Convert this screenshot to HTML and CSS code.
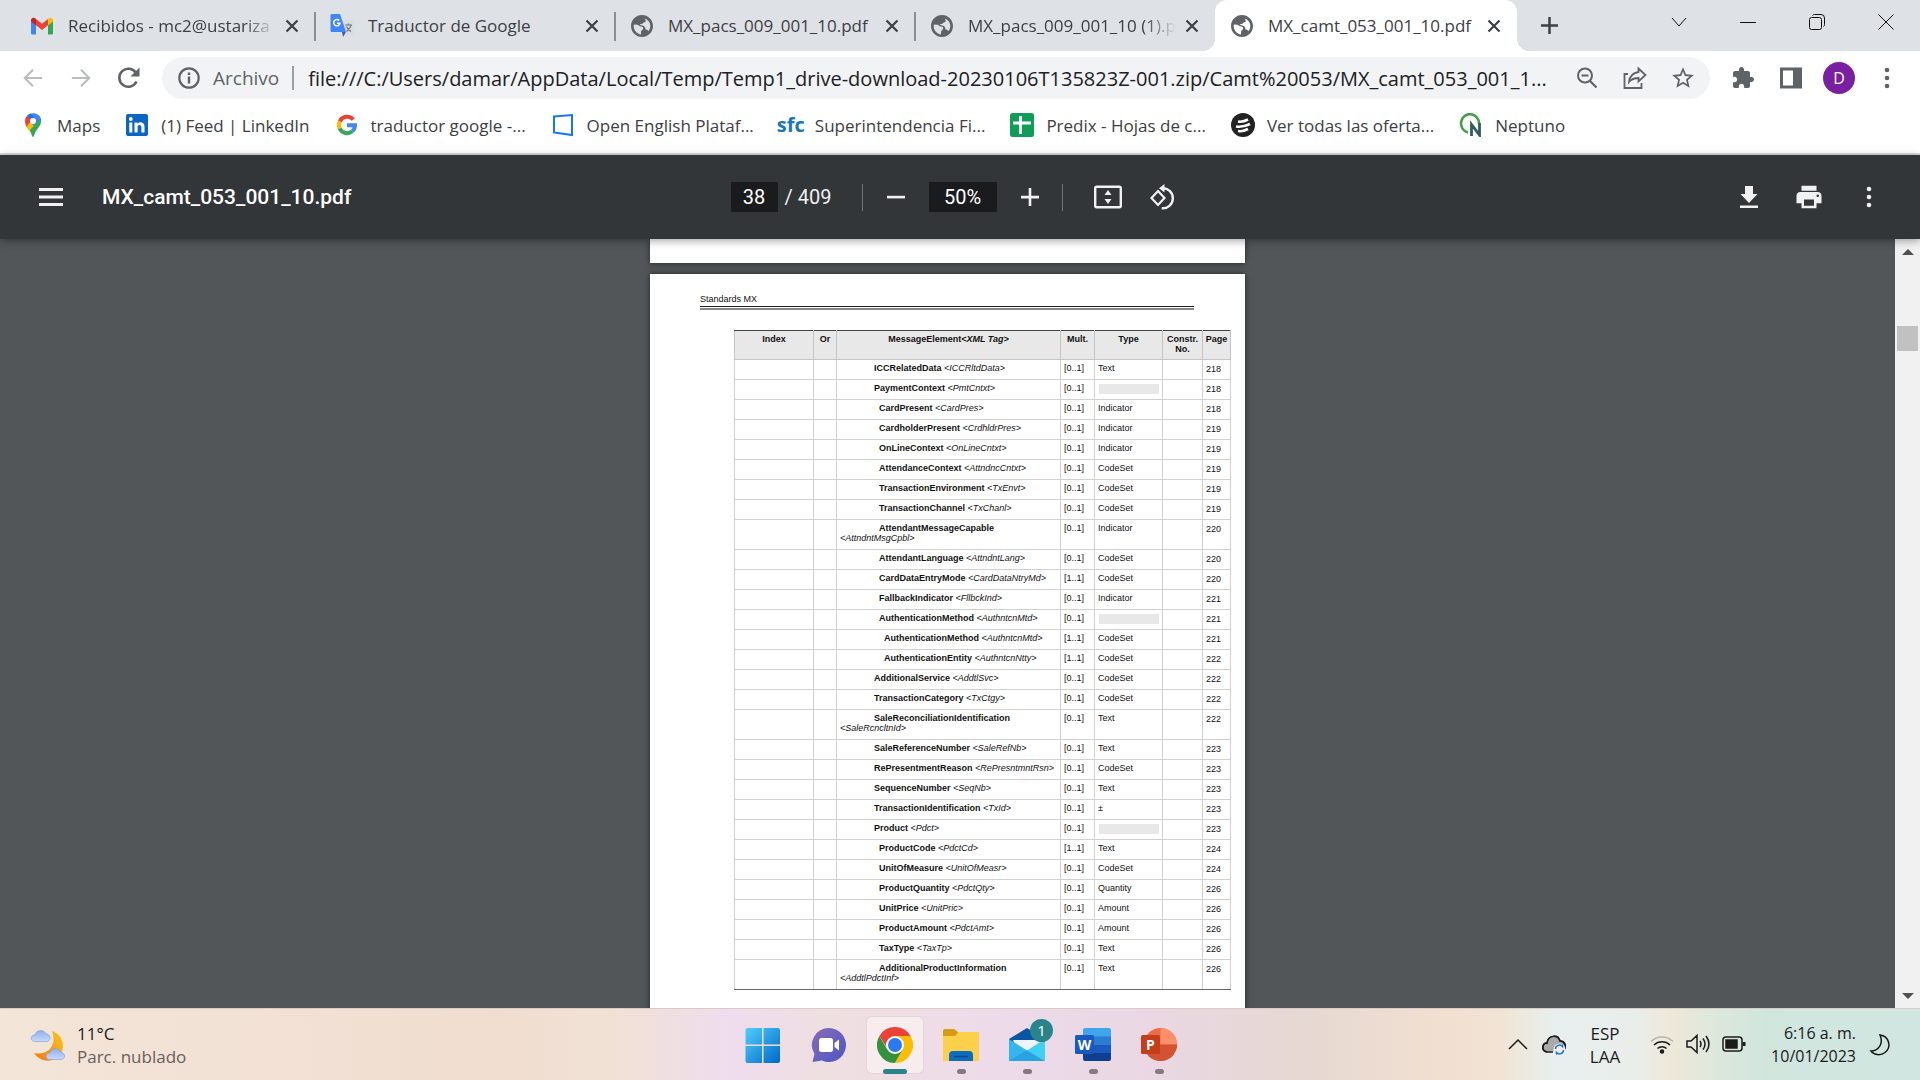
FILE: index.html
```html
<!DOCTYPE html>
<html lang="es">
<head>
<meta charset="utf-8">
<title>MX_camt_053_001_10.pdf</title>
<link rel="stylesheet" href="styles.css">
</head>
<body>
<svg class="defs" aria-hidden="true">
  <symbol id="globe" viewBox="0 0 24 24"><path d="M12 1C5.920 1 1 5.920 1 12s4.920 11 11 11 11-4.920 11-11S18.080 1 12 1zm-1 19.500c-4-.5-7.300-4-7.300-8.500 0-.6.1-1 .2-1.500l3.600.2c1.500.3 2 1.800 3.500 1.800 1.800 0 2.500 1 2 2.500-.4 1.200-2 1.500-2 3v2.500zm7.500-3.300c-.6-1-1.500-1.700-3-1.700 0-2.500-1.500-4-4-4.200-.8-.1-1.500-.6-1.500-1.300h1.500c1.500 0 1.500-1.500 3-1.700 1.500-.2 1.500-1.500.8-2.800l-.8-1c3.400 1 5.800 4 5.800 7.500 0 2-.7 3.800-1.800 5.200z"/></symbol>
  <symbol id="x" viewBox="0 0 16 16"><path d="M2.500 2.500l11 11M13.500 2.500l-11 11" fill="none" stroke="currentColor" stroke-width="2.200"/></symbol>
  <symbol id="kebab" viewBox="0 0 24 24"><circle cx="12" cy="4" r="2.300"/><circle cx="12" cy="12" r="2.300"/><circle cx="12" cy="20" r="2.300"/></symbol>
</svg>

<div class="app">
  <header class="browser">
    <div class="tabstrip">
      <nav class="tabs" aria-label="Pestañas">
        <div class="tab">
          <svg class="ico" viewBox="0 0 24 24"><path fill="#4285f4" d="M1 6v13c0 1 .7 1.500 1.500 1.500H6V10z"/><path fill="#34a853" d="M23 6v13c0 1-.7 1.500-1.500 1.500H18V10z"/><path fill="#ea4335" d="M6 5l6 4.700L18 5v6.300l-6 4.700-6-4.700z"/><path fill="#c5221f" d="M1 6.500C1 4 3.500 3.200 5 4.300l1 .7v6.300L1 7.600z"/><path fill="#fbbc04" d="M23 6.500c0-2.500-2.500-3.300-4-2.200l-1 .7v6.300l5-3.700z"/></svg>
          <a href="#" class="tab-title fade">Recibidos - mc2@ustariza</a>
          <button class="close" aria-label="Cerrar"><svg viewBox="0 0 16 16"><use href="#x"/></svg></button>
        </div>
        <div class="tab">
          <svg class="ico" viewBox="0 0 24 24"><path fill="#d9dce0" d="M11 6h11c1 0 1.500.5 1.500 1.500v12c0 1-.5 1.500-1.500 1.500h-7z"/><path fill="none" stroke="#70757a" stroke-width="1.200" d="M15 11h7M18.500 9.500V11M21 11c-.5 3-2.500 5-4.500 6.500M16.500 12.500c.7 2 2.500 4 4.500 5"/><path fill="#4285f4" d="M2 0h8l6 18H2C1 18 .5 17.500.5 16.500v-15C.5.500 1 0 2 0z"/><path fill="#3a5bc7" d="M12 18h4l-3 5z"/><path fill="none" stroke="#fff" stroke-width="1.500" d="M9.300 6.500A3.200 3.200 0 1 0 10 9.300H7"/></svg>
          <a href="#" class="tab-title">Traductor de Google</a>
          <button class="close" aria-label="Cerrar"><svg viewBox="0 0 16 16"><use href="#x"/></svg></button>
        </div>
        <div class="tab">
          <svg class="ico grey" viewBox="0 0 24 24"><use href="#globe"/></svg>
          <a href="#" class="tab-title">MX_pacs_009_001_10.pdf</a>
          <button class="close" aria-label="Cerrar"><svg viewBox="0 0 16 16"><use href="#x"/></svg></button>
        </div>
        <div class="tab last">
          <svg class="ico grey" viewBox="0 0 24 24"><use href="#globe"/></svg>
          <a href="#" class="tab-title fade">MX_pacs_009_001_10 (1).pdf</a>
          <button class="close" aria-label="Cerrar"><svg viewBox="0 0 16 16"><use href="#x"/></svg></button>
        </div>
        <div class="tab active">
          <svg class="ico grey" viewBox="0 0 24 24"><use href="#globe"/></svg>
          <a href="#" class="tab-title">MX_camt_053_001_10.pdf</a>
          <button class="close" aria-label="Cerrar"><svg viewBox="0 0 16 16"><use href="#x"/></svg></button>
        </div>
      </nav>
      <button class="newtab" aria-label="Nueva pestaña"><svg viewBox="0 0 20 20"><path d="M10 1v18M1 10h18" stroke="currentColor" stroke-width="2.600"/></svg></button>
      <div class="window-controls">
        <button aria-label="Buscar pestañas"><svg viewBox="0 0 16 16"><path d="M1 4l7 8 7-8"/></svg></button>
        <button aria-label="Minimizar"><svg viewBox="0 0 16 16"><path d="M0 8.500h16"/></svg></button>
        <button aria-label="Restaurar"><svg viewBox="0 0 16 16"><rect x=".5" y="3.500" width="12" height="12" rx="2"/><path d="M3.500 1.500Q4 .5 5.500.5H12q3.500 0 3.500 3.500v6.500q0 1.500-1 2"/></svg></button>
        <button aria-label="Cerrar ventana"><svg viewBox="0 0 16 16"><path d="M.5.500l15 15M15.500.500l-15 15"/></svg></button>
      </div>
    </div>

    <div class="toolbar">
      <button class="tool pale" aria-label="Atrás"><svg viewBox="0 0 24 24"><path d="M22 12H3M12 3l-9 9 9 9" fill="none" stroke="currentColor" stroke-width="2.200"/></svg></button>
      <button class="tool pale" aria-label="Adelante"><svg viewBox="0 0 24 24"><path d="M2 12h19M12 3l9 9-9 9" fill="none" stroke="currentColor" stroke-width="2.200"/></svg></button>
      <button class="tool" aria-label="Recargar"><svg viewBox="0 0 24 24"><path d="M19.500 15.500A9 9 0 1 1 19 7" fill="none" stroke="currentColor" stroke-width="2.600"/><path d="M22.500 1.500v9h-9z"/></svg></button>
      <div class="omnibox">
        <svg class="ico grey" viewBox="0 0 24 24"><circle cx="12" cy="12" r="9.700" fill="none" stroke="currentColor" stroke-width="2.200"/><path d="M10.800 10.500h2.400v7h-2.400zM10.800 6.500h2.400V9h-2.400z"/></svg>
        <label class="scheme" for="url">Archivo</label>
        <input id="url" class="url" type="text" value="file:///C:/Users/damar/AppData/Local/Temp/Temp1_drive-download-20230106T135823Z-001.zip/Camt%20053/MX_camt_053_001_1...">
        <button class="tool" aria-label="Zoom"><svg viewBox="0 0 24 24"><circle cx="10" cy="9.500" r="7" fill="none" stroke="currentColor" stroke-width="2"/><path d="M6.500 9.500h7M15 15l6.500 6.500" fill="none" stroke="currentColor" stroke-width="2.200"/></svg></button>
        <button class="tool" aria-label="Compartir"><svg viewBox="0 0 24 24"><path d="M5 8H1.500v14h17v-5M15.500 2.500l7 6.500-7 6.500V12c-4 0-7 1-9.500 4 .5-5 3.500-9 9.500-10z" fill="none" stroke="currentColor" stroke-width="1.800"/></svg></button>
        <button class="tool" aria-label="Favorito"><svg class="star" viewBox="0 0 24 24"><path d="M22 9.240l-7.190-.62L12 2 9.190 8.630 2 9.240l5.460 4.730L5.820 21 12 17.270 18.180 21l-1.630-7.030L22 9.240zM12 15.400l-3.760 2.270 1-4.280-3.320-2.880 4.380-.38L12 6.100l1.710 4.040 4.380.38-3.320 2.880 1 4.280L12 15.400z"/></svg></button>
      </div>
      <button class="tool" aria-label="Extensiones"><svg viewBox="0 0 24 24"><path d="M20.500 11H19V7c0-1.100-.9-2-2-2h-4V3.500C13 2.120 11.880 1 10.500 1S8 2.120 8 3.500V5H4c-1.100 0-1.990.9-1.990 2v3.800H3.500c1.490 0 2.700 1.210 2.700 2.700s-1.210 2.700-2.700 2.700H2V20c0 1.100.9 2 2 2h3.800v-1.500c0-1.490 1.210-2.700 2.700-2.700 1.490 0 2.700 1.210 2.700 2.700V22H17c1.100 0 2-.9 2-2v-4h1.500c1.380 0 2.500-1.120 2.500-2.500S21.880 11 20.500 11z"/></svg></button>
      <button class="tool" aria-label="Panel lateral"><svg viewBox="0 0 24 24"><path fill-rule="evenodd" d="M1 1.500h22v21H1zM4 4.500v15h10v-15z"/></svg></button>
      <button class="avatar" aria-label="Perfil">D</button>
      <button class="tool" aria-label="Menú"><svg viewBox="0 0 24 24"><use href="#kebab"/></svg></button>
    </div>

    <nav class="bookmarks" aria-label="Marcadores">
      <a href="#"><svg class="ico" viewBox="0 0 24 24"><path fill="#34a853" d="M12 24c-.7 0-1-1.500-2-4-1-2.300-3.500-4.500-4.800-7L17 2c2.500 1.500 3.500 4 3 7-.5 4.500-4.500 7-6 11-1 2.500-1.300 4-2 4z"/><path fill="#fbbc04" d="M5.200 13L9 8.500l5.500 2.500-6.300 7C7 16.300 6 14.800 5.200 13z"/><path fill="#4285f4" d="M9 .7C14-1 18.300 1.500 19.700 5.500L12.500 13 8 6z"/><path fill="#ea4335" d="M6 2.800L11 7l-5.500 6.500C3.500 9.800 3.500 5.800 6 2.800z"/><path fill="#1a73e8" d="M6 2.800C7 1.600 8 1 9.500.5L13 4l-3 3z"/><circle cx="12" cy="8" r="3" fill="#fff"/></svg><span>Maps</span></a>
      <a href="#"><svg class="ico" viewBox="0 0 24 24"><rect x="1" y="1" width="22" height="22" rx="2" fill="#0a66c2"/><path fill="#fff" d="M4.300 9.500h3v10h-3zM9.500 9.500h3v1.300c1.500-2.500 7-2.300 7 2.700v6h-3.100v-5.400c0-3-3.800-2.700-3.800 0v5.400H9.500z"/><circle cx="5.800" cy="6" r="1.900" fill="#fff"/></svg><span>(1) Feed | LinkedIn</span></a>
      <a href="#"><svg class="ico" viewBox="0 0 24 24"><g fill="none" stroke-width="4"><path stroke="#ea4335" d="M18.300 6.600A8 8 0 0 0 4.800 8.500"/><path stroke="#fbbc04" d="M4.800 8.300a8 8 0 0 0 0 7.400"/><path stroke="#34a853" d="M4.700 15.500a8 8 0 0 0 12.500 2.700"/><path stroke="#4285f4" d="M12 12.200h8a8 8 0 0 1-2.800 6"/></g></svg><span>traductor google -...</span></a>
      <a href="#"><svg class="ico" viewBox="0 0 24 24"><path d="M3 3.500L21 2v20L3 19.500z" fill="none" stroke="#1677f2" stroke-width="2"/></svg><span>Open English Plataf...</span></a>
      <a href="#"><b class="sfc ico" aria-hidden="true">sfc</b><span>Superintendencia Fi...</span></a>
      <a href="#"><svg class="ico" viewBox="0 0 24 24"><rect width="24" height="24" rx="2.500" fill="#0f9d58"/><path d="M3 10h18M10.500 3v18" stroke="#fff" stroke-width="2.800"/></svg><span>Predix - Hojas de c...</span></a>
      <a href="#"><svg class="ico" viewBox="0 0 24 24"><circle cx="12" cy="12" r="12" fill="#222"/><path d="M7 8.500q5 .8 10-2M5 13.500q7 1 14-2.500M7 18q5 .8 10-2" fill="none" stroke="#fff" stroke-width="2.600"/></svg><span>Ver todas las oferta...</span></a>
      <a href="#"><svg class="ico" viewBox="0 0 24 24"><path d="M9 19.500A9 9.300 0 1 1 20 11" fill="none" stroke="#43a047" stroke-width="2.600"/><path d="M12.500 23V11.500L20.500 22V10" fill="none" stroke="#345c5c" stroke-width="2.800"/></svg><span>Neptuno</span></a>
    </nav>
  </header>

  <section class="pdfbar">
    <div class="pdf-left">
      <button class="ptool" aria-label="Menú"><svg viewBox="0 0 24 24"><path d="M0 3h24v3H0zM0 10.500h24v3H0zM0 18h24v3H0z"/></svg></button>
      <h1>MX_camt_053_001_10.pdf</h1>
    </div>
    <div class="pdf-center">
      <input class="field page-no" type="text" value="38" aria-label="Página">
      <span class="total">/ 409</span>
      <i class="sep"></i>
      <button class="ptool" aria-label="Alejar"><svg viewBox="0 0 24 24"><path d="M3 10.800h18v2.600H3z"/></svg></button>
      <input class="field zoom" type="text" value="50%" aria-label="Zoom">
      <button class="ptool" aria-label="Acercar"><svg viewBox="0 0 24 24"><path d="M3 10.800h18v2.600H3zM10.700 3h2.600v18h-2.600z"/></svg></button>
      <i class="sep second"></i>
      <button class="ptool wide" aria-label="Ajustar"><svg viewBox="0 0 28 24"><rect x="1.200" y="1.700" width="25.600" height="20.600" rx="1.500" fill="none" stroke="currentColor" stroke-width="2.400"/><path d="M14 5l3.500 5h-7zM14 19l3.500-5h-7z"/></svg></button>
      <button class="ptool wide" aria-label="Girar"><svg viewBox="0 0 28 26"><path d="M9 7l6.500 7L9 21 2.500 14z" fill="none" stroke="currentColor" stroke-width="2.200"/><path d="M13 4.300a10 10 0 1 1-.3 19.900" fill="none" stroke="currentColor" stroke-width="2.400"/><path d="M15.500 0v8.500L10 4.300z"/></svg></button>
    </div>
    <div class="pdf-right">
      <button class="ptool" aria-label="Descargar"><svg viewBox="0 0 24 24"><path d="M20.500 9H16V1H8v8H3.500l8.500 9zM3 20.500V23h18v-2.500z"/></svg></button>
      <button class="ptool" aria-label="Imprimir"><svg class="print" viewBox="0 0 24 24"><path fill-rule="evenodd" d="M19 8H5c-1.660 0-3 1.340-3 3v6h4v4h12v-4h4v-6c0-1.660-1.340-3-3-3zm-3 11H8v-5h8v5zm3-7c-.55 0-1-.45-1-1s.45-1 1-1 1 .45 1 1-.45 1-1 1zm-1-9H6v4h12V3z"/></svg></button>
      <button class="ptool" aria-label="Más"><svg viewBox="0 0 24 24"><use href="#kebab"/></svg></button>
    </div>
  </section>

  <main class="viewer">
    <div class="pages">
      <div class="sheet prev"></div>
      <article class="sheet current">
        <p class="running">Standards MX</p>
        <table class="elements">
          <colgroup><col class="c-index"><col class="c-or"><col class="c-elem"><col class="c-mult"><col class="c-type"><col class="c-constr"><col class="c-page"></colgroup>
          <thead><tr><th>Index</th><th>Or</th><th>MessageElement<em>&lt;XML Tag&gt;</em></th><th>Mult.</th><th>Type</th><th>Constr. No.</th><th>Page</th></tr></thead>
          <tbody>
            <tr><td></td><td></td><td class="l1"><b>ICCRelatedData</b> <em>&lt;ICCRltdData&gt;</em></td><td>[0..1]</td><td>Text</td><td></td><td>218</td></tr>
            <tr><td></td><td></td><td class="l1"><b>PaymentContext</b> <em>&lt;PmtCntxt&gt;</em></td><td>[0..1]</td><td><i class="block"></i></td><td></td><td>218</td></tr>
            <tr><td></td><td></td><td class="l2"><b>CardPresent</b> <em>&lt;CardPres&gt;</em></td><td>[0..1]</td><td>Indicator</td><td></td><td>218</td></tr>
            <tr><td></td><td></td><td class="l2"><b>CardholderPresent</b> <em>&lt;CrdhldrPres&gt;</em></td><td>[0..1]</td><td>Indicator</td><td></td><td>219</td></tr>
            <tr><td></td><td></td><td class="l2"><b>OnLineContext</b> <em>&lt;OnLineCntxt&gt;</em></td><td>[0..1]</td><td>Indicator</td><td></td><td>219</td></tr>
            <tr><td></td><td></td><td class="l2"><b>AttendanceContext</b> <em>&lt;AttndncCntxt&gt;</em></td><td>[0..1]</td><td>CodeSet</td><td></td><td>219</td></tr>
            <tr><td></td><td></td><td class="l2"><b>TransactionEnvironment</b> <em>&lt;TxEnvt&gt;</em></td><td>[0..1]</td><td>CodeSet</td><td></td><td>219</td></tr>
            <tr><td></td><td></td><td class="l2"><b>TransactionChannel</b> <em>&lt;TxChanl&gt;</em></td><td>[0..1]</td><td>CodeSet</td><td></td><td>219</td></tr>
            <tr class="two"><td></td><td></td><td class="l2"><b>AttendantMessageCapable</b><br><em>&lt;AttndntMsgCpbl&gt;</em></td><td>[0..1]</td><td>Indicator</td><td></td><td>220</td></tr>
            <tr><td></td><td></td><td class="l2"><b>AttendantLanguage</b> <em>&lt;AttndntLang&gt;</em></td><td>[0..1]</td><td>CodeSet</td><td></td><td>220</td></tr>
            <tr><td></td><td></td><td class="l2"><b>CardDataEntryMode</b> <em>&lt;CardDataNtryMd&gt;</em></td><td>[1..1]</td><td>CodeSet</td><td></td><td>220</td></tr>
            <tr><td></td><td></td><td class="l2"><b>FallbackIndicator</b> <em>&lt;FllbckInd&gt;</em></td><td>[0..1]</td><td>Indicator</td><td></td><td>221</td></tr>
            <tr><td></td><td></td><td class="l2"><b>AuthenticationMethod</b> <em>&lt;AuthntcnMtd&gt;</em></td><td>[0..1]</td><td><i class="block"></i></td><td></td><td>221</td></tr>
            <tr><td></td><td></td><td class="l3"><b>AuthenticationMethod</b> <em>&lt;AuthntcnMtd&gt;</em></td><td>[1..1]</td><td>CodeSet</td><td></td><td>221</td></tr>
            <tr><td></td><td></td><td class="l3"><b>AuthenticationEntity</b> <em>&lt;AuthntcnNtty&gt;</em></td><td>[1..1]</td><td>CodeSet</td><td></td><td>222</td></tr>
            <tr><td></td><td></td><td class="l1"><b>AdditionalService</b> <em>&lt;AddtlSvc&gt;</em></td><td>[0..1]</td><td>CodeSet</td><td></td><td>222</td></tr>
            <tr><td></td><td></td><td class="l1"><b>TransactionCategory</b> <em>&lt;TxCtgy&gt;</em></td><td>[0..1]</td><td>CodeSet</td><td></td><td>222</td></tr>
            <tr class="two"><td></td><td></td><td class="l1"><b>SaleReconciliationIdentification</b><br><em>&lt;SaleRcncltnId&gt;</em></td><td>[0..1]</td><td>Text</td><td></td><td>222</td></tr>
            <tr><td></td><td></td><td class="l1"><b>SaleReferenceNumber</b> <em>&lt;SaleRefNb&gt;</em></td><td>[0..1]</td><td>Text</td><td></td><td>223</td></tr>
            <tr><td></td><td></td><td class="l1"><b>RePresentmentReason</b> <em>&lt;RePresntmntRsn&gt;</em></td><td>[0..1]</td><td>CodeSet</td><td></td><td>223</td></tr>
            <tr><td></td><td></td><td class="l1"><b>SequenceNumber</b> <em>&lt;SeqNb&gt;</em></td><td>[0..1]</td><td>Text</td><td></td><td>223</td></tr>
            <tr><td></td><td></td><td class="l1"><b>TransactionIdentification</b> <em>&lt;TxId&gt;</em></td><td>[0..1]</td><td>±</td><td></td><td>223</td></tr>
            <tr><td></td><td></td><td class="l1"><b>Product</b> <em>&lt;Pdct&gt;</em></td><td>[0..1]</td><td><i class="block"></i></td><td></td><td>223</td></tr>
            <tr><td></td><td></td><td class="l2"><b>ProductCode</b> <em>&lt;PdctCd&gt;</em></td><td>[1..1]</td><td>Text</td><td></td><td>224</td></tr>
            <tr><td></td><td></td><td class="l2"><b>UnitOfMeasure</b> <em>&lt;UnitOfMeasr&gt;</em></td><td>[0..1]</td><td>CodeSet</td><td></td><td>224</td></tr>
            <tr><td></td><td></td><td class="l2"><b>ProductQuantity</b> <em>&lt;PdctQty&gt;</em></td><td>[0..1]</td><td>Quantity</td><td></td><td>226</td></tr>
            <tr><td></td><td></td><td class="l2"><b>UnitPrice</b> <em>&lt;UnitPric&gt;</em></td><td>[0..1]</td><td>Amount</td><td></td><td>226</td></tr>
            <tr><td></td><td></td><td class="l2"><b>ProductAmount</b> <em>&lt;PdctAmt&gt;</em></td><td>[0..1]</td><td>Amount</td><td></td><td>226</td></tr>
            <tr><td></td><td></td><td class="l2"><b>TaxType</b> <em>&lt;TaxTp&gt;</em></td><td>[0..1]</td><td>Text</td><td></td><td>226</td></tr>
            <tr class="two"><td></td><td></td><td class="l2"><b>AdditionalProductInformation</b><br><em>&lt;AddtlPdctInf&gt;</em></td><td>[0..1]</td><td>Text</td><td></td><td>226</td></tr>
          </tbody>
        </table>
      </article>
    </div>
    <div class="scrollbar" aria-hidden="true">
      <svg viewBox="0 0 12 6"><path d="M6 0l6 6H0z"/></svg>
      <i class="thumb"></i>
      <svg class="down" viewBox="0 0 12 6"><path d="M0 0h12L6 6z"/></svg>
    </div>
  </main>

  <footer class="taskbar">
    <div class="weather">
      <svg viewBox="0 0 36 36"><defs><linearGradient id="mo" x1="0" y1="1" x2="1" y2="0"><stop offset="0" stop-color="#f07a12"/><stop offset="1" stop-color="#fbc61e"/></linearGradient><linearGradient id="cl" x1="0" y1="0" x2="0" y2="1"><stop offset="0" stop-color="#8fb0ee"/><stop offset="1" stop-color="#c9d8fa"/></linearGradient></defs><path fill="url(#mo)" d="M22 4c9 3 13 12 10 20-4 11-20 14-28 2 12 3 24-6 18-22z"/><path fill="url(#cl)" stroke="#7c9ce0" stroke-width=".6" d="M4 14.500c-4-1-4-6.500 1-6.500 1-5.500 9-6 11-1 4-.5 6 6 1.500 7.500z"/><path fill="url(#cl)" stroke="#7c9ce0" stroke-width=".6" d="M19 32.500c-4-1-4-6.500 1-6.500 1-5.500 9-6 10-1 5 0 6.500 6 2 7.500z"/></svg>
      <div class="lines"><span>11°C</span><span class="muted">Parc. nublado</span></div>
    </div>
    <nav class="apps" aria-label="Aplicaciones">
      <button aria-label="Inicio"><svg viewBox="0 0 36 36"><defs><linearGradient id="wi" x1="0" y1="0" x2="1" y2="1"><stop offset="0" stop-color="#4fd0fb"/><stop offset="1" stop-color="#0067c9"/></linearGradient></defs><path fill="url(#wi)" d="M.5 3q0-2 2-2H17v16.500H.5zM18.500 1H33q2 0 2 2v14.500H18.500zM.5 19H17v17H2.500q-2 0-2-2zM18.500 19H35v15q0 2-2 2H18.500z"/></svg></button>
      <button aria-label="Chat"><svg viewBox="0 0 36 36"><defs><linearGradient id="ch" x1="0" y1="0" x2="1" y2="1"><stop offset="0" stop-color="#8a6bb5"/><stop offset="1" stop-color="#4a57c4"/></linearGradient></defs><path fill="url(#ch)" d="M18 1a17 17 0 1 1-7 32.500L1.500 35l2-8A17 17 0 0 1 18 1z"/><rect x="8" y="11" width="14" height="14" rx="2.500" fill="#fff"/><path fill="#fff" d="M23.500 16l4.500-3.500v11L23.500 20z"/></svg></button>
      <button class="on" aria-label="Chrome"><svg viewBox="0 0 36 36"><path fill="#ea4335" d="M2.400 9a18 18 0 0 1 31.200 0H18l-6 15z"/><path fill="#34913e" d="M2.400 9A18 18 0 0 0 18 36l8-13.500L10.200 22.500z"/><path fill="#fbbc04" d="M18 9h15.600A18 18 0 0 1 18 36l7.800-13.500z"/><circle cx="18" cy="18" r="9" fill="#fff"/><circle cx="18" cy="18" r="7" fill="#2b79ee"/></svg><i></i></button>
      <button class="run" aria-label="Explorador"><svg viewBox="0 0 36 36"><path fill="#d99a14" d="M0 4q0-2 2-2h9l4 3v6H0z"/><path fill="#fcd04a" d="M0 9h12l4-4h20v29H0z"/><path fill="#0c6cc0" d="M6 34v-6q0-4 4-4h16q4 0 4 4v6z"/><path d="M11 29.500h14" stroke="#0a4a8a" stroke-width="1.500"/></svg><i></i></button>
      <button class="run" aria-label="Correo"><svg viewBox="0 0 36 36"><path fill="#0a56a5" d="M0 12L18 1l18 11v5H0z"/><path fill="#eef4fa" d="M4 13h28v12H9z"/><path fill="#34b6ec" d="M0 12l18 11.500L36 34H0z"/><path fill="#3fd0f4" d="M36 12L18 23.500 36 34z"/><path fill="#1b8ad8" d="M0 34l18-11 18 11z" opacity=".45"/></svg><b class="badge">1</b><i></i></button>
      <button class="run" aria-label="Word"><svg viewBox="0 0 36 36"><path fill="#41a5ee" d="M8 3q0-2 2-2h24q2 0 2 2v7H8z"/><path fill="#2b7cd3" d="M8 9.500h28V18H8z"/><path fill="#185abd" d="M8 18h28v8H8z"/><path fill="#103f91" d="M8 26h28v6q0 2-2 2H10q-2 0-2-2z"/><rect y="8" width="19" height="19" rx="1.500" fill="#185abd"/><text x="9.500" y="22.500" text-anchor="middle">W</text></svg><i></i></button>
      <button class="run" aria-label="PowerPoint"><svg viewBox="0 0 36 36"><circle cx="19.500" cy="17.500" r="16.500" fill="#ed6c47"/><path fill="#ff8f6b" d="M19.500 1A16.500 16.500 0 0 1 36 17.500H19.500z"/><path fill="#d35230" d="M3 17.500a16.500 16.500 0 0 0 33 0z"/><rect y="8" width="19" height="19" rx="1.500" fill="#c43e1c"/><text x="9.500" y="22.500" text-anchor="middle">P</text></svg><i></i></button>
    </nav>
    <div class="tray">
      <button aria-label="Iconos ocultos"><svg viewBox="0 0 24 24"><path d="M3 16l9-9 9 9"/></svg></button>
      <button aria-label="OneDrive"><svg viewBox="0 0 24 24"><path fill="#aaa" d="M5 19c-6-1-5-9 0-9C6 2 16 1 18 8c5 0 6 5 5 8"/><path d="M5 19c-6-1-5-9 0-9C6 2 16 1 18 8c5 0 6 5 5 8M5 19h6"/><circle cx="17.500" cy="16.500" r="6" fill="#eef" stroke="none"/><path stroke="#1a73d0" d="M13.500 16a4 4 0 0 1 7-2.500v-2M21.500 17a4 4 0 0 1-7 2.500v2"/></svg></button>
      <button class="lang">ESP<br>LAA</button>
      <button aria-label="Wi-Fi"><svg viewBox="0 0 24 24"><path stroke="#b5b3aa" d="M1 8.500a15.500 15.500 0 0 1 22 0"/><path d="M4 12a11.500 11.500 0 0 1 16 0M7.500 15.500a6.500 6.500 0 0 1 9 0"/><circle cx="12" cy="18.500" r="1.500" fill="#1b1b1b"/></svg></button>
      <button aria-label="Volumen"><svg viewBox="0 0 24 24"><path d="M1 8h4l6-5.500v17L5 14H1zM14 8q2 3 0 6M17 5.500q4 5.500 0 11M20 3q6 8 0 16"/></svg></button>
      <button aria-label="Batería"><svg viewBox="0 0 24 24"><rect x="1" y="4" width="19" height="14" rx="3"/><rect x="4" y="7" width="11" height="8" fill="#1b1b1b"/><path d="M22 9v4" stroke-width="3"/></svg></button>
      <button class="clock">6:16 a. m.<br>10/01/2023</button>
      <button aria-label="Notificaciones"><svg viewBox="0 0 24 24"><path d="M12 2c9 1 12 12 5 17.500-4.500 3.500-11 2.500-14-1.500 7 0 13-7 9-16z"/></svg></button>
    </div>
  </footer>
</div>
</body>
</html>
```
FILE: styles.css
```css
* { box-sizing: border-box; }
body { margin: 0; font-family: "Open Sans", "Noto Sans", sans-serif; color: #3c4043; }
button, input { font: inherit; color: inherit; border: 0; background: none; padding: 0; margin: 0; }
button { display: flex; align-items: center; justify-content: center; flex: none; }
a { color: inherit; text-decoration: none; }
svg { display: block; fill: currentColor; }
.defs { display: none; }
.app { height: 100vh; display: flex; flex-direction: column; overflow: hidden; }
.ico { width: 24px; height: 24px; flex: none; }
.grey { color: #5f6368; }

/* Browser chrome */
.browser { background: #fff; border-bottom: 2px solid #d5d9dc; }
.tabstrip { display: flex; align-items: center; height: 51px; background: #dee1e6; padding-left: 15px; }
.tabs { display: flex; height: 51px; }
.tab { display: flex; align-items: center; width: 300px; padding: 0 13px 0 15px; position: relative; }
.tab:not(.last):not(.active)::after { content: ""; position: absolute; right: -1px; top: 12px; width: 2px; height: 29px; background: #8b8e92; }
.tab.active { width: 302px; background: #fff; border-radius: 12px 12px 0 0; }
.tab.active::before, .tab.active::after { content: ""; position: absolute; bottom: 0; width: 12px; height: 12px; }
.tab.active::before { left: -12px; background: radial-gradient(circle at 0 0, #dee1e6 12px, #fff 12px); }
.tab.active::after { right: -12px; background: radial-gradient(circle at 100% 0, #dee1e6 12px, #fff 12px); }
.tab-title { flex: 1; margin-left: 14px; overflow: hidden; white-space: nowrap; font-size: 17px; }
.fade { mask-image: linear-gradient(to right, #000 176px, transparent 208px); }
.close { width: 20px; height: 20px; margin-left: 4px; }
.close svg { width: 16px; height: 16px; }
.newtab { width: 64px; height: 51px; }
.newtab svg { width: 19px; height: 19px; }
.window-controls { display: flex; margin-left: auto; height: 51px; }
.window-controls button { width: 69px; height: 44px; }
.window-controls svg { width: 16px; height: 16px; fill: none; stroke: #111; stroke-width: 1; }

.toolbar { display: flex; align-items: center; height: 54px; padding: 0 9px; }
.tool { width: 48px; height: 42px; color: #5f6368; }
.tool svg { width: 24px; height: 24px; }
.tool .star { width: 26px; height: 26px; }
.pale { color: #b9bcbf; }
.pale svg { width: 22px; height: 22px; }
.omnibox { flex: 1; min-width: 0; display: flex; align-items: center; height: 42px; margin: 0 9px; padding: 0 3px 0 15px; border-radius: 21px; background: #f1f3f4; }
.scheme { margin-left: 12px; padding-right: 13px; color: #5f6368; font-size: 19px; line-height: 24px; border-right: 2px solid #9aa0a6; }
.url { flex: 1; min-width: 0; margin-left: 14px; font-size: 20px; color: #202124; }
.avatar { width: 32px; height: 32px; margin: 0 8px; border-radius: 50%; background: #7b1fa2; color: #fff; font-size: 16px; }

.bookmarks { display: flex; align-items: center; gap: 25px; height: 48px; padding: 0 21px 8px; font-size: 17px; white-space: nowrap; }
.bookmarks a { display: flex; align-items: center; gap: 12px; }
.sfc { font: bold 20px/24px "Open Sans", sans-serif; color: #1b75bb; display: flex; justify-content: center; }

/* PDF toolbar */
.pdfbar { position: relative; z-index: 1; display: grid; grid-template-columns: 1fr auto 1fr; align-items: center; height: 84px; padding: 0 33px; background: #323639; color: #f1f1f1; box-shadow: 0 2px 8px rgba(0, 0, 0, .35); font-family: Roboto, sans-serif; font-size: 20px; }
.pdf-left, .pdf-center, .pdf-right { display: flex; align-items: center; }
.pdf-left h1 { margin: 0 0 0 33px; font-size: 21px; font-weight: 500; color: #fff; }
.pdf-center { margin-right: 9px; }
.pdf-right { justify-content: flex-end; gap: 24px; }
.ptool { width: 36px; height: 36px; }
.ptool svg { width: 24px; height: 24px; }
.ptool .print { width: 30px; height: 30px; }
.ptool.wide { margin-left: 19px; }
.ptool.wide svg { width: 28px; height: 28px; }
.field { height: 30px; background: #191b1c; text-align: center; color: #fff; }
.page-no { width: 47px; }
.zoom { width: 68px; margin: 0 15px; }
.total { width: 70px; margin-left: 7px; white-space: nowrap; }
.sep { width: 1px; height: 27px; margin: 0 15px 0 7px; background: #6f7274; }
.sep.second { margin: 0 8px 0 14px; }

/* Document area */
.viewer { flex: 1; min-height: 0; display: flex; background: #525659; }
.pages { flex: 1; overflow: hidden; display: flex; flex-direction: column; align-items: center; gap: 11px; }
.sheet { flex: none; width: 595px; background: #fff; box-shadow: 0 0 6px rgba(0, 0, 0, .55); }
.prev { height: 24px; }
.current { min-height: 770px; padding: 20px 14px 24px 50px; font: 9px/10px "Liberation Sans", Arial, sans-serif; color: #111; }
.running { margin: 0 37px 23px 0; padding-bottom: 2px; border-bottom: 1px solid #222; box-shadow: 0 1px #fff, 0 3px #888; }
.elements { width: 496px; margin-left: 34px; table-layout: fixed; border-collapse: collapse; border-top: 1px solid #444; border-bottom: 1px solid #666; }
.c-index { width: 79px; } .c-or { width: 23px; } .c-elem { width: 224px; } .c-mult { width: 34px; }
.c-type { width: 68px; } .c-constr { width: 40px; } .c-page { width: 28px; }
.elements th { height: 29px; padding: 3px 0; vertical-align: top; background: #e8e8e8; border: 1px solid #c4c4c4; border-top-color: #444; }
.elements td { height: 20px; padding: 3px 3px 0; vertical-align: top; white-space: nowrap; border: 1px solid #d0d0d0; }
.elements td:last-child { padding-top: 4px; }
.elements .two td { height: 30px; }
.elements tbody tr:last-child td { border-bottom-color: #666; }
.elements .l1 { text-indent: 34px; }
.elements .l2 { text-indent: 39px; }
.elements .l3 { text-indent: 44px; }
.elements br + em { display: block; text-indent: 0; }
.elements br { display: none; }
.block { display: block; height: 10px; margin: 1px 0 0 1px; background: #e8e8e8; }
.scrollbar { display: flex; flex-direction: column; align-items: center; width: 25px; padding: 10px 0 9px; background: #f1f1f1; color: #505050; }
.scrollbar svg { width: 12px; height: 6px; }
.thumb { width: 21px; height: 25px; margin-top: 71px; background: #c1c1c1; }
.scrollbar .down { margin-top: auto; }

/* Taskbar */
.taskbar { display: grid; grid-template-columns: 1fr auto 1fr; align-items: center; height: 72px; flex: none; color: #1b1b1b; font-size: 17px; line-height: 23px; border-top: 1px solid #d8ccc6;
  background: linear-gradient(to right, #f4e5d9, #f0ddd0 26%, #f1e1d5 32%, #efdcee 38%, #eedfe0 43%, #eedbea 52%, #ead7e3 60%, #e6d8d2 68%, #f1dfd0 75%, #f2e3d4 78%, #e8efee 81%, #e9eeeb 85%, #eee8d9 87%, #dfe8dc 89%, #d0e6dd 92%, #d2e6e1); }
.weather { display: flex; align-items: center; gap: 11px; padding-left: 30px; }
.weather svg { width: 36px; height: 36px; }
.lines { display: flex; flex-direction: column; }
.muted { color: #67605b; }
.apps { display: flex; margin-left: 2px; }
.apps button { position: relative; width: 56px; height: 56px; margin: 0 5px; border-radius: 5px; }
.apps svg { width: 36px; height: 36px; }
.apps text { font: bold 14px "Open Sans", sans-serif; fill: #fff; }
.apps .on { background: #f7edee; box-shadow: 0 0 0 1px #e4d5d6; }
.apps i { position: absolute; left: 50%; bottom: -1px; width: 9px; height: 5px; margin-left: -4px; border-radius: 3px; background: #857a80; }
.apps .on i { width: 24px; margin-left: -12px; background: #28838b; }
.badge { position: absolute; right: 2px; top: 2px; width: 23px; height: 23px; border-radius: 50%; background: #28838b; color: #fff; font-weight: 400; font-size: 15px; }
.tray { display: flex; align-items: center; justify-content: flex-end; padding-right: 22px; }
.tray button { width: 36px; }
.tray svg { width: 24px; height: 24px; fill: none; stroke: #1b1b1b; stroke-width: 1.500; }
.tray .lang { width: 66px; margin-right: 6px; text-align: center; }
.tray .clock { width: 110px; justify-content: flex-end; text-align: right; padding-right: 6px; font-size: 16px; }
```
